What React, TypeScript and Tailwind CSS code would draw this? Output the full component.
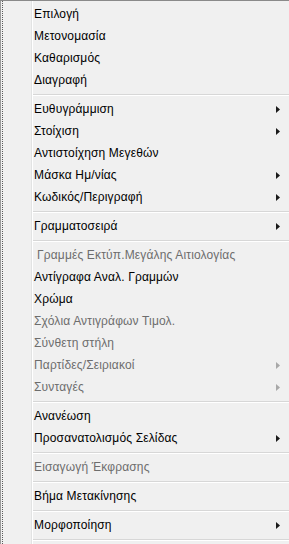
import React from 'react';

type Entry =
  | { kind: 'item'; label: string; disabled?: boolean; sub?: boolean; indent?: boolean }
  | { kind: 'sep' };

const entries: Entry[] = [
  { kind: 'item', label: 'Επιλογή' },
  { kind: 'item', label: 'Μετονομασία' },
  { kind: 'item', label: 'Καθαρισμός' },
  { kind: 'item', label: 'Διαγραφή' },
  { kind: 'sep' },
  { kind: 'item', label: 'Ευθυγράμμιση', sub: true },
  { kind: 'item', label: 'Στοίχιση', sub: true },
  { kind: 'item', label: 'Αντιστοίχηση Μεγεθών' },
  { kind: 'item', label: 'Μάσκα Ημ/νίας', sub: true },
  { kind: 'item', label: 'Κωδικός/Περιγραφή', sub: true },
  { kind: 'sep' },
  { kind: 'item', label: 'Γραμματοσειρά', sub: true },
  { kind: 'sep' },
  { kind: 'item', label: 'Γραμμές Εκτύπ.Μεγάλης Αιτιολογίας', disabled: true, indent: true },
  { kind: 'item', label: 'Αντίγραφα Αναλ. Γραμμών' },
  { kind: 'item', label: 'Χρώμα' },
  { kind: 'item', label: 'Σχόλια Αντιγράφων Τιμολ.', disabled: true },
  { kind: 'item', label: 'Σύνθετη στήλη', disabled: true },
  { kind: 'item', label: 'Παρτίδες/Σειριακοί', disabled: true, sub: true },
  { kind: 'item', label: 'Συνταγές', disabled: true, sub: true },
  { kind: 'sep' },
  { kind: 'item', label: 'Ανανέωση' },
  { kind: 'item', label: 'Προσανατολισμός Σελίδας', sub: true },
  { kind: 'sep' },
  { kind: 'item', label: 'Εισαγωγή Έκφρασης', disabled: true },
  { kind: 'sep' },
  { kind: 'item', label: 'Βήμα Μετακίνησης' },
  { kind: 'sep' },
  { kind: 'item', label: 'Μορφοποίηση', sub: true },
  { kind: 'sep' },
];

function Arrow({ disabled }: { disabled?: boolean }) {
  return (
    <svg width="4" height="7" viewBox="0 0 4 7" className="shrink-0">
      <path d="M0 0 L4 3.5 L0 7 Z" fill={disabled ? '#a8a8a8' : '#1a1a1a'} />
    </svg>
  );
}

export default function App() {
  return (
    <div
      className="flex w-[289px] h-[544px] overflow-hidden bg-[#f0f0f0] border-t border-[#8a8a8a]"
      style={{ fontFamily: '"Liberation Sans", Arial, sans-serif' }}
    >
      {/* icon gutter */}
      <div className="flex w-[31px] shrink-0">
        <div className="w-px bg-[#9a9a9a]" />
        <div className="w-px" />
        <div className="w-px border-l border-dotted border-[#5a5a5a]" />
      </div>
      <div className="w-px shrink-0 bg-[#e2e3e3]" />
      <div className="w-px shrink-0 bg-white" />

      <div className="flex flex-col flex-1 pt-[2px]">
        {entries.map((e, i) =>
          e.kind === 'sep' ? (
            <div key={i} className="h-[7px] pt-[3px] shrink-0">
              <div className="h-px bg-[#d7d7d7]" />
              <div className="h-px bg-white" />
            </div>
          ) : (
            <div key={i} className="flex items-center h-[22px] shrink-0 pl-[1px] pr-[9px]">
              <span
                className={`flex-1 text-[12px] leading-none tracking-[0.15px] whitespace-nowrap ${
                  e.disabled ? 'text-[#6d6d6d]' : 'text-black'
                } ${e.indent ? 'pl-[3px]' : ''}`}
              >
                {e.label}
              </span>
              {e.sub && <Arrow disabled={e.disabled} />}
            </div>
          )
        )}
      </div>
    </div>
  );
}
